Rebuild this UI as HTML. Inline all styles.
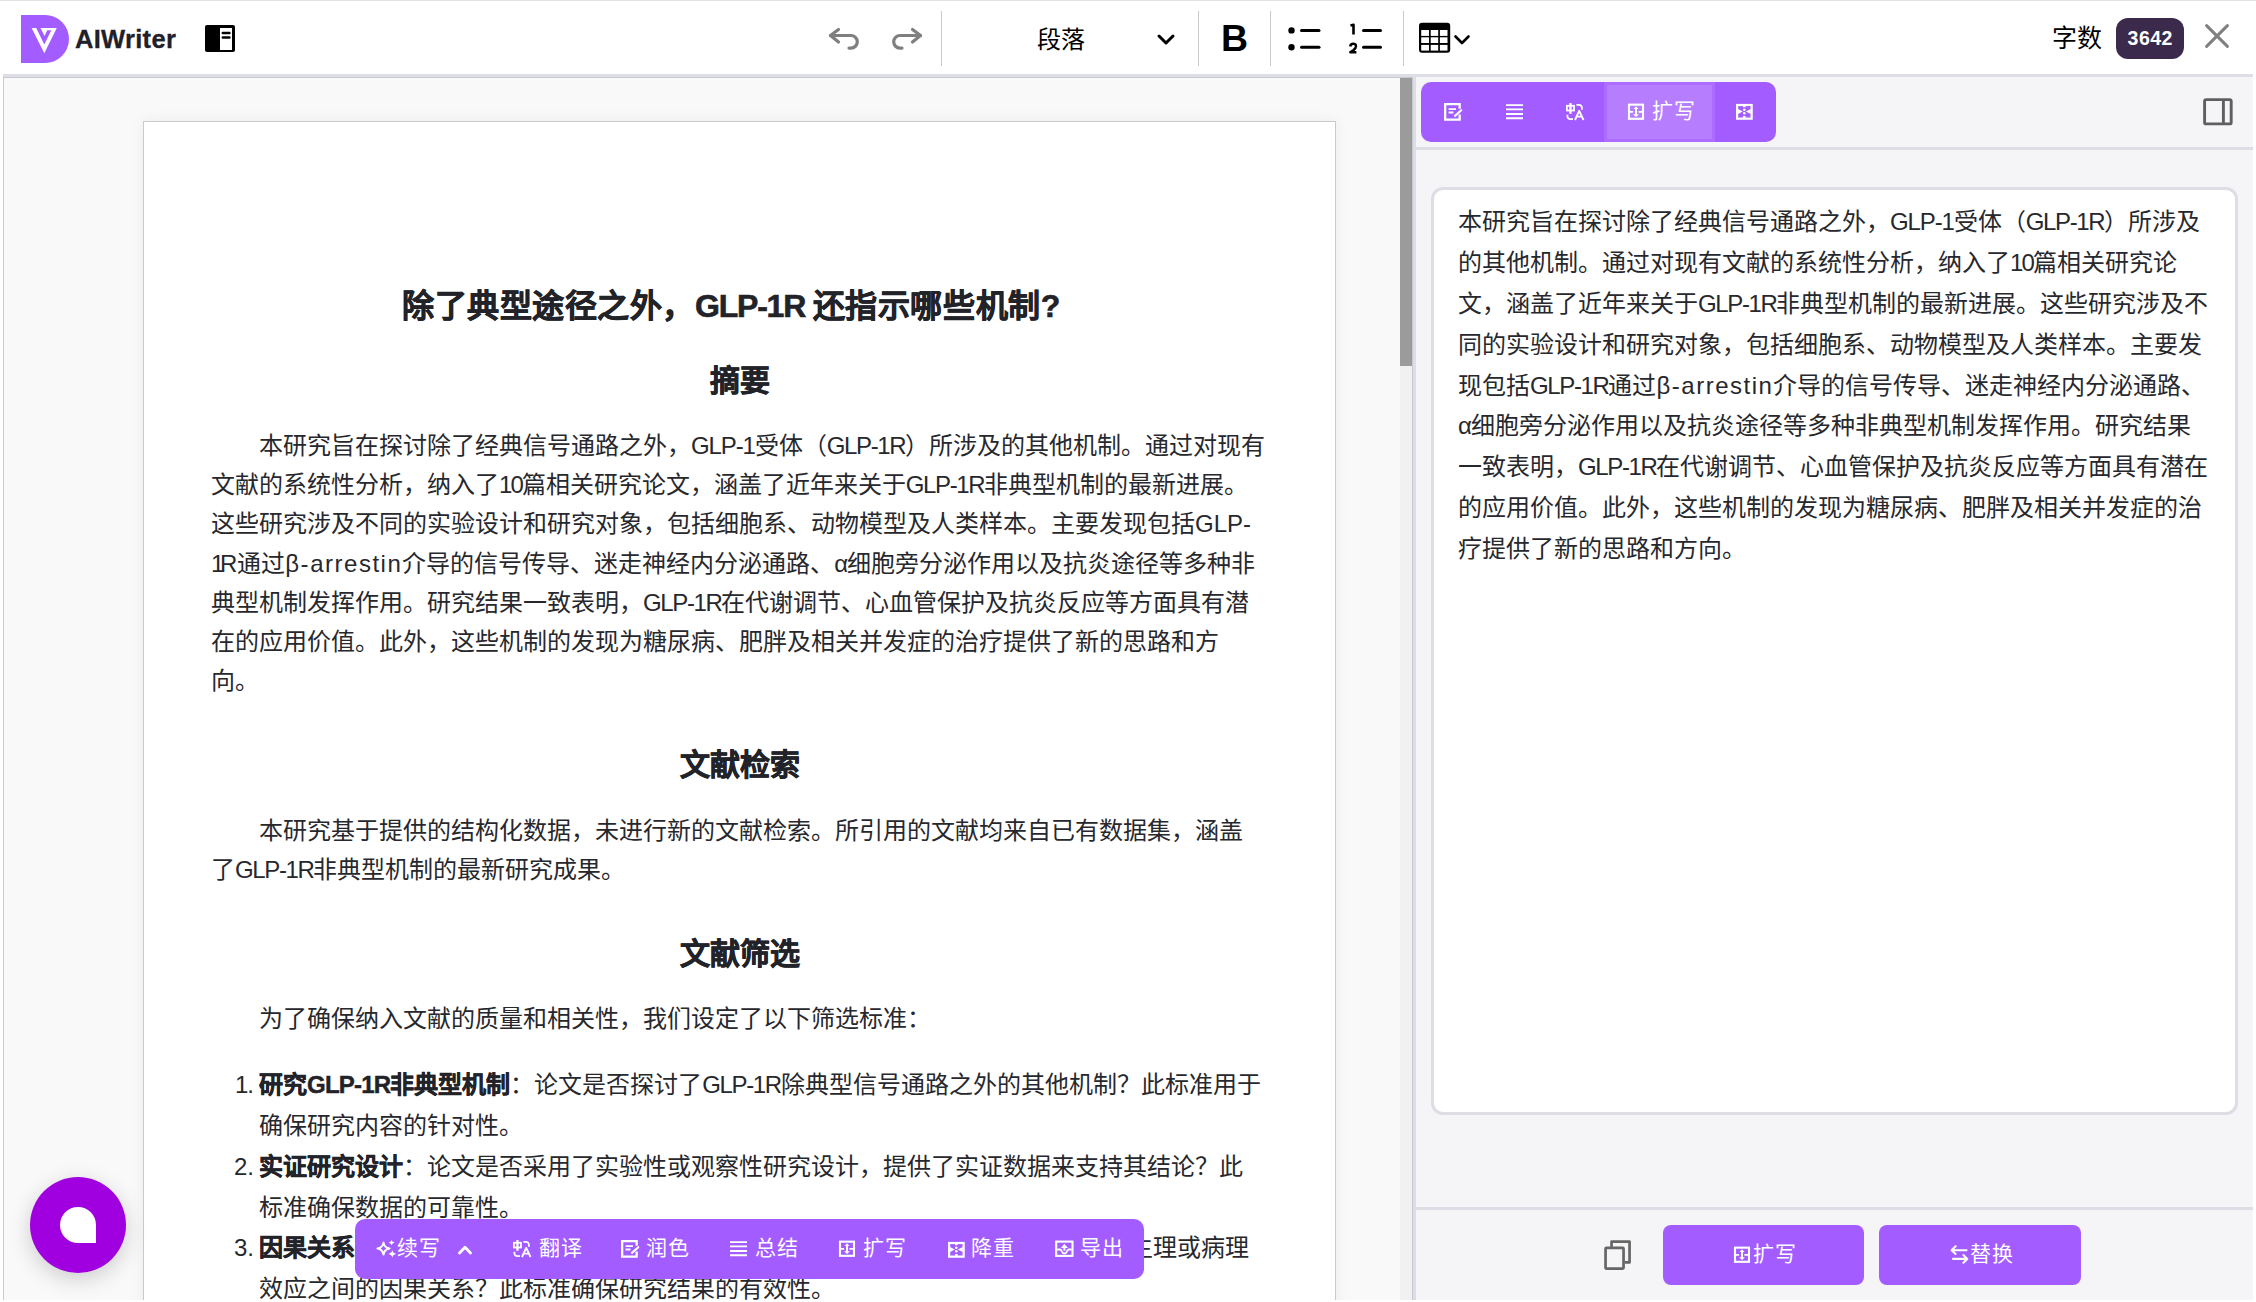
<!DOCTYPE html>
<html lang="zh-CN">
<head>
<meta charset="utf-8">
<style>
*{box-sizing:border-box;margin:0;padding:0}
html,body{width:2256px;height:1302px;overflow:hidden;background:#fff}
body{position:relative;font-family:"Liberation Sans",sans-serif;color:#26272b}
.abs{position:absolute}
#topline{left:0;top:0;width:2256px;height:1px;background:#e2e2e2}
#tb{left:0;top:1px;width:2256px;height:73px;background:#fff}
#tbb{left:3px;top:74px;width:2250px;height:3px;background:#dddde5}
.sep{position:absolute;top:11px;width:1px;height:55px;background:#cacaca}
#logo{left:21px;top:15px;width:48px;height:48px;background:#a35cff;border-radius:0 24px 24px 0}
#brand{left:75px;top:21.5px;font-weight:bold;font-size:25.5px;line-height:34px;color:#1f2029;letter-spacing:0.3px;-webkit-text-stroke:0.3px #1f2029}
#lp{left:3px;top:77px;width:1410px;height:1223px;background:#f9f9f9;border-top:1px solid #c9cacf;border-left:1px solid #c9cacf;border-right:1px solid #c9cacf;overflow:hidden}
#page{left:139px;top:43px;width:1193px;height:1300px;background:#fff;border:1px solid #c9cacf;box-shadow:0 0 14px rgba(0,0,0,0.06)}
#track{left:1396px;top:0;width:12px;height:1223px;background:#f1f1f1}
#thumb{left:1396px;top:0;width:12px;height:288px;background:#9b9b9b}
#rp{left:1413px;top:77px;width:840px;height:1223px;background:#f5f5f7;border-left:3px solid #dddde5}
#rph{left:0;top:70px;width:837px;height:3px;background:#dddde5}
#tabs{left:5px;top:5px;width:355px;height:60px;background:#a35cff;border-radius:10px;overflow:hidden}
#act{left:183px;top:0;width:111px;height:60px;background:#ab6cff;padding:3px}
#act div{width:105px;height:54px;background:#b67dff}
#box{left:15px;top:110px;width:807px;height:928px;background:#fff;border:3px solid #dddde5;border-radius:12px}
#rpf{left:0;top:1130px;width:837px;height:3px;background:#dddde5}
.btn{position:absolute;top:1148px;height:60px;background:#a35cff;border-radius:8px;color:#fff;font-size:21px;line-height:60px;text-align:center}
#chat{left:30px;top:1177px;width:96px;height:96px;border-radius:50%;background:#a000e0;box-shadow:0 6px 22px rgba(0,0,0,0.18)}
#chat div{position:absolute;left:30px;top:30px;width:36px;height:36px;background:#fff;border-radius:18px 18px 0 18px}
#ft{left:355px;top:1219px;width:789px;height:60px;background:#a35cff;border-radius:10px;color:#fff}
.fi{position:absolute;top:0;height:60px;line-height:60px;font-size:21px;white-space:nowrap}
.fi svg{position:absolute}
.ln{position:absolute;white-space:nowrap;color:#27282d}
</style>
</head>
<body>
<div id="topline" class="abs"></div>
<div id="tb" class="abs"></div>
<div id="tbb" class="abs"></div>

<!-- logo -->
<div id="logo" class="abs">
<svg width="48" height="48" viewBox="0 0 48 48" style="position:absolute;left:0;top:0">
<path d="M10.6 12.9 L35.8 12.9 L23.3 38.3 Z M15.2 12.9 L23.3 29.5 L30.3 15.3 L26.2 15.3 L23.6 21 L19.5 12.9 Z" fill="#fff" fill-rule="evenodd"/>
</svg>
</div>
<div id="brand" class="abs">AIWriter</div>
<!-- sidebar icon -->
<svg class="abs" style="left:205px;top:25px" width="30" height="27" viewBox="0 0 30 27">
<rect x="0" y="0" width="30" height="27" rx="2" fill="#000"/>
<rect x="15" y="3" width="12" height="22" fill="#fff"/>
<rect x="16.6" y="6.7" width="9" height="2.5" rx="1" fill="#000"/>
<rect x="16.6" y="11.3" width="9" height="2.5" rx="1" fill="#000"/>
</svg>

<!-- undo / redo -->
<svg class="abs" style="left:826px;top:25px" width="36" height="28" viewBox="0 0 36 28">
<g fill="none" stroke="#7f7f7f" stroke-width="3.2" stroke-linecap="round" stroke-linejoin="round">
<polyline points="12.5,4.5 4.5,10.5 12.5,17"/>
<path d="M4.5 10.5 H25 A6.3 6.3 0 0 1 25 23.1 H23"/>
</g>
</svg>
<svg class="abs" style="left:889px;top:25px;transform:scaleX(-1)" width="36" height="28" viewBox="0 0 36 28">
<g fill="none" stroke="#7f7f7f" stroke-width="3.2" stroke-linecap="round" stroke-linejoin="round">
<polyline points="12.5,4.5 4.5,10.5 12.5,17"/>
<path d="M4.5 10.5 H25 A6.3 6.3 0 0 1 25 23.1 H23"/>
</g>
</svg>
<div class="sep" style="left:941px"></div>
<div class="abs" style="left:1037px;top:21.5px;font-size:24px;line-height:36px;color:#000">段落</div>
<svg class="abs" style="left:1155px;top:32px" width="22" height="16" viewBox="0 0 22 16">
<polyline points="4,4 11,11 18,4" fill="none" stroke="#000" stroke-width="3" stroke-linecap="round" stroke-linejoin="round"/>
</svg>
<div class="sep" style="left:1198px"></div>
<div class="abs" style="left:1221px;top:18px;font-size:37.5px;font-weight:bold;line-height:40px;color:#000">B</div>
<div class="sep" style="left:1270px"></div>
<!-- bullet list -->
<svg class="abs" style="left:1284px;top:22px" width="40" height="34" viewBox="0 0 40 34">
<circle cx="7.5" cy="8.4" r="3.2" fill="#000"/><circle cx="7.5" cy="25.2" r="3.2" fill="#000"/>
<g stroke="#000" stroke-width="3" stroke-linecap="round"><line x1="17.5" y1="8.4" x2="35" y2="8.4"/><line x1="17.5" y1="25.2" x2="35" y2="25.2"/></g>
</svg>
<!-- numbered list -->
<svg class="abs" style="left:1344px;top:22px" width="42" height="34" viewBox="0 0 42 34">
<path d="M6.5 3.5 L9.5 2.8 L9.5 12.5" fill="none" stroke="#000" stroke-width="2.6" stroke-linejoin="round"/>
<path d="M6.2 24.5 Q6.5 21.8 9.2 21.8 Q12 21.8 12 24.3 Q12 26 9.6 28 L6.2 30.2 L12.4 30.2" fill="none" stroke="#000" stroke-width="2.4" stroke-linejoin="round"/>
<g stroke="#000" stroke-width="3" stroke-linecap="round"><line x1="19.5" y1="8.4" x2="36.5" y2="8.4"/><line x1="19.5" y1="25.2" x2="36.5" y2="25.2"/></g>
</svg>
<div class="sep" style="left:1403px"></div>
<!-- table -->
<svg class="abs" style="left:1418px;top:22px" width="56" height="32" viewBox="0 0 56 32">
<rect x="1" y="0.8" width="31.2" height="30" rx="3" fill="#000"/>
<g fill="#fff">
<rect x="3.2" y="8" width="7.8" height="5.9"/><rect x="12.7" y="8" width="7.5" height="5.9"/><rect x="21.9" y="8" width="7.6" height="5.9"/>
<rect x="3.2" y="15.3" width="7.8" height="5.7"/><rect x="12.7" y="15.3" width="7.5" height="5.7"/><rect x="21.9" y="15.3" width="7.6" height="5.7"/>
<rect x="3.2" y="22.9" width="7.8" height="5.7"/><rect x="12.7" y="22.9" width="7.5" height="5.7"/><rect x="21.9" y="22.9" width="7.6" height="5.7"/>
</g>
<polyline points="37.5,14.5 44,21 50.5,14.5" fill="none" stroke="#000" stroke-width="2.6" stroke-linecap="round" stroke-linejoin="round"/>
</svg>

<!-- right toolbar -->
<div class="abs" style="left:2052px;top:20px;font-size:25px;line-height:36px;color:#000">字数</div>
<div class="abs" style="left:2116px;top:18px;width:68px;height:41px;border-radius:12px;background:#3c2a4d;color:#fff;font-weight:bold;font-size:19.5px;line-height:41px;text-align:center;letter-spacing:0.5px;text-indent:0.5px">3642</div>
<svg class="abs" style="left:2202px;top:21px" width="30" height="30" viewBox="0 0 30 30">
<g stroke="#808080" stroke-width="3" stroke-linecap="round"><line x1="4.6" y1="4.6" x2="25.4" y2="25.4"/><line x1="25.4" y1="4.6" x2="4.6" y2="25.4"/></g>
</svg>

<!-- left panel -->
<div id="lp" class="abs">
  <div id="page" class="abs"></div>
  <div id="track" class="abs"></div>
  <div id="thumb" class="abs"></div>
</div>

<!-- right panel -->
<div id="rp" class="abs">
  <div id="rph" class="abs"></div>
  <div id="tabs" class="abs">
    <div id="act" class="abs"><div></div></div>
  </div>
  <svg class="abs" style="left:786px;top:20px" width="32" height="30" viewBox="0 0 32 30">
  <rect x="2.6" y="2.6" width="26.6" height="24.3" rx="1.5" fill="none" stroke="#5f5f5f" stroke-width="2.9"/>
  <line x1="21.4" y1="2.6" x2="21.4" y2="26.9" stroke="#5f5f5f" stroke-width="2.9"/>
  </svg>
  <div id="box" class="abs"></div>
  <div id="rpf" class="abs"></div>
  <svg class="abs" style="left:188px;top:1160px" width="32" height="34" viewBox="0 0 32 34">
  <g fill="none" stroke="#666" stroke-width="2.8" stroke-linejoin="round">
  <path d="M7.55 10.85 V4.55 H25.55 V25.45 H20.9" stroke-width="2.7"/>
  <rect x="1.55" y="10.85" width="18" height="20.7" rx="0.8" stroke-width="2.7"/>
  </g>
  </svg>
</div>
<div class="btn" style="left:1663px;top:1225px;width:201px"></div>
<div class="btn" style="left:1879px;top:1225px;width:202px"></div>

<div class="ln" style="left:402px;top:285.50px;font-size:32px;line-height:40px;font-weight:bold;-webkit-text-stroke:0.6px #222329;color:#222329;letter-spacing:0.55px">除了典型途径之外，<span style="letter-spacing:-1.20px;">GLP-1R </span>还指示哪些机制<span style="letter-spacing:-2.33px;">?</span></div>
<div class="ln" style="left:710px;top:360.85px;font-size:30px;line-height:40px;font-weight:bold;-webkit-text-stroke:0.6px #222329;color:#222329">摘要</div>
<div class="ln" style="left:259px;top:426.02px;font-size:24px;line-height:39.17px;">本研究旨在探讨除了经典信号通路之外，<span style="letter-spacing:-1.11px;">GLP-1</span>受体（<span style="letter-spacing:-1.38px;">GLP-1R</span>）所涉及的其他机制。通过对现有</div>
<div class="ln" style="left:211px;top:465.19px;font-size:24px;line-height:39.17px;">文献的系统性分析，纳入了<span style="letter-spacing:-1.97px;">10</span>篇相关研究论文，涵盖了近年来关于<span style="letter-spacing:-1.38px;">GLP-1R</span>非典型机制的最新进展。</div>
<div class="ln" style="left:211px;top:504.36px;font-size:24px;line-height:39.17px;">这些研究涉及不同的实验设计和研究对象，包括细胞系、动物模型及人类样本。主要发现包括GLP-</div>
<div class="ln" style="left:211px;top:543.52px;font-size:24px;line-height:39.17px;"><span style="letter-spacing:-4.4px">1</span>R通过<span style="letter-spacing:1.52px;">β-arrestin</span>介导的信号传导、迷走神经内分泌通路、<span style="letter-spacing:-1.30px;">α</span>细胞旁分泌作用以及抗炎途径等多种非</div>
<div class="ln" style="left:211px;top:582.69px;font-size:24px;line-height:39.17px;">典型机制发挥作用。研究结果一致表明，<span style="letter-spacing:-1.38px;">GLP-1R</span>在代谢调节、心血管保护及抗炎反应等方面具有潜</div>
<div class="ln" style="left:211px;top:621.87px;font-size:24px;line-height:39.17px;">在的应用价值。此外，这些机制的发现为糖尿病、肥胖及相关并发症的治疗提供了新的思路和方</div>
<div class="ln" style="left:211px;top:661.03px;font-size:24px;line-height:39.17px;">向。</div>
<div class="ln" style="left:680px;top:744.60px;font-size:30px;line-height:40px;font-weight:bold;-webkit-text-stroke:0.6px #222329;color:#222329">文献检索</div>
<div class="ln" style="left:259px;top:811.01px;font-size:24px;line-height:39.17px;">本研究基于提供的结构化数据，未进行新的文献检索。所引用的文献均来自已有数据集，涵盖</div>
<div class="ln" style="left:211px;top:850.18px;font-size:24px;line-height:39.17px;">了<span style="letter-spacing:-1.38px;">GLP-1R</span>非典型机制的最新研究成果。</div>
<div class="ln" style="left:680px;top:933.60px;font-size:30px;line-height:40px;font-weight:bold;-webkit-text-stroke:0.6px #222329;color:#222329">文献筛选</div>
<div class="ln" style="left:259px;top:998.62px;font-size:24px;line-height:39.17px;">为了确保纳入文献的质量和相关性，我们设定了以下筛选标准：</div>
<div class="ln" style="left:259px;top:1065.45px;font-size:24px;line-height:40.7px;"><span style="font-weight:bold;-webkit-text-stroke:0.45px #222329;color:#222329;">研究</span><span style="font-weight:bold;-webkit-text-stroke:0.45px #222329;color:#222329;letter-spacing:-0.78px;">GLP-1R</span><span style="font-weight:bold;-webkit-text-stroke:0.45px #222329;color:#222329;">非典型机制</span>：论文是否探讨了<span style="letter-spacing:-1.38px;">GLP-1R</span>除典型信号通路之外的其他机制？此标准用于</div>
<div class="ln" style="left:259px;top:1106.15px;font-size:24px;line-height:40.7px;">确保研究内容的针对性。</div>
<div class="ln" style="left:259px;top:1146.85px;font-size:24px;line-height:40.7px;"><span style="font-weight:bold;-webkit-text-stroke:0.45px #222329;color:#222329;">实证研究设计</span>：论文是否采用了实验性或观察性研究设计，提供了实证数据来支持其结论？此</div>
<div class="ln" style="left:259px;top:1187.55px;font-size:24px;line-height:40.7px;">标准确保数据的可靠性。</div>
<div class="ln" style="left:259px;top:1228.25px;font-size:24px;line-height:40.7px;"><span style="font-weight:bold;-webkit-text-stroke:0.45px #222329;color:#222329;">因果关系推断</span>：论文是否探讨了<span style="letter-spacing:-1.38px;">GLP-1R</span>激活与代谢或</div>
<div class="ln" style="left:259px;top:1268.95px;font-size:24px;line-height:40.7px;">效应之间的因果关系？此标准确保研究结果的有效性。</div>
<div class="ln" style="right:2002px;top:1065.45px;font-size:24px;line-height:40.7px;"><span style="letter-spacing:-1px">1</span>.</div>
<div class="ln" style="right:2002px;top:1146.85px;font-size:24px;line-height:40.7px;">2.</div>
<div class="ln" style="right:2002px;top:1228.25px;font-size:24px;line-height:40.7px;">3.</div>
<div class="ln" style="left:1129px;top:1228.25px;font-size:24px;line-height:40.7px;">生理或病理</div>
<div class="ln" style="left:1458px;top:202.30px;font-size:24px;line-height:40.8px;">本研究旨在探讨除了经典信号通路之外，<span style="letter-spacing:-1.11px;">GLP-1</span>受体（<span style="letter-spacing:-1.38px;">GLP-1R</span>）所涉及</div>
<div class="ln" style="left:1458px;top:243.10px;font-size:24px;line-height:40.8px;">的其他机制。通过对现有文献的系统性分析，纳入了<span style="letter-spacing:-1.97px;">10</span>篇相关研究论</div>
<div class="ln" style="left:1458px;top:283.90px;font-size:24px;line-height:40.8px;">文，涵盖了近年来关于<span style="letter-spacing:-1.38px;">GLP-1R</span>非典型机制的最新进展。这些研究涉及不</div>
<div class="ln" style="left:1458px;top:324.70px;font-size:24px;line-height:40.8px;">同的实验设计和研究对象，包括细胞系、动物模型及人类样本。主要发</div>
<div class="ln" style="left:1458px;top:365.50px;font-size:24px;line-height:40.8px;">现包括<span style="letter-spacing:-1.38px;">GLP-1R</span>通过<span style="letter-spacing:1.52px;">β-arrestin</span>介导的信号传导、迷走神经内分泌通路、</div>
<div class="ln" style="left:1458px;top:406.30px;font-size:24px;line-height:40.8px;"><span style="letter-spacing:-1.30px;">α</span>细胞旁分泌作用以及抗炎途径等多种非典型机制发挥作用。研究结果</div>
<div class="ln" style="left:1458px;top:447.10px;font-size:24px;line-height:40.8px;">一致表明，<span style="letter-spacing:-1.38px;">GLP-1R</span>在代谢调节、心血管保护及抗炎反应等方面具有潜在</div>
<div class="ln" style="left:1458px;top:487.90px;font-size:24px;line-height:40.8px;">的应用价值。此外，这些机制的发现为糖尿病、肥胖及相关并发症的治</div>
<div class="ln" style="left:1458px;top:528.70px;font-size:24px;line-height:40.8px;">疗提供了新的思路和方向。</div>
<div id="chat" class="abs"><div></div></div>
<div id="ft" class="abs"></div>
<!-- tab icons -->
<svg class="abs" style="left:1438px;top:98px" width="30" height="30" viewBox="0 0 30 30"><g fill="none" stroke="#fff" stroke-linecap="butt">
<path d="M21.65 10.8 V6.15 H7.15 V21.55 H21.65 V16.4" stroke-width="2.3"/>
<path d="M10.6 11.05 H18 M10.6 14.5 H15.4" stroke-width="1.8"/>
<path d="M17 17.9 L23.3 12.2" stroke-width="2.1" stroke-linecap="round"/></g></svg>
<svg class="abs" style="left:1500px;top:98px" width="30" height="30" viewBox="0 0 30 30"><g stroke="#fff" stroke-width="1.9">
<path d="M6 7.1 H23 M6 11.4 H23 M6 16 H23 M6 20.2 H23"/></g></svg>
<svg class="abs" style="left:1560px;top:98px" width="30" height="30" viewBox="0 0 30 30"><g fill="none" stroke="#fff" stroke-width="1.8">
<rect x="6.9" y="7.8" width="7.1" height="4.7"/>
<path d="M10.45 5 V15.8" stroke-width="2.3"/>
<path d="M16.4 6.85 H19 A2.9 2.9 0 0 1 21.9 9.75 V11.8"/>
<path d="M7.4 16.8 V18.2 A2.9 2.9 0 0 0 10.3 21.1 H13"/>
<path d="M15 22 L19.2 12.9 L23.5 22 M16.6 18.6 H21.8" stroke-width="1.9" stroke-linejoin="round"/></g></svg>
<svg class="abs" style="left:1620px;top:96px" width="30" height="30" viewBox="0 0 30 30"><g fill="none" stroke="#fff" stroke-width="2.1">
<rect x="9" y="8.65" width="14" height="14.15"/>
<path d="M9 15.9 H13.1 M18.4 15.9 H23" stroke-width="1.9"/>
<path d="M16 12 V19.5" stroke-width="2"/></g>
<path d="M16 10.3 L18.5 13 H13.5 Z M16 21.1 L19 18.2 H13 Z" fill="#fff"/></svg>
<div class="ln" style="left:1652px;top:91px;font-size:21px;line-height:40px;color:#fff;letter-spacing:1.3px">扩写</div>
<svg class="abs" style="left:1728px;top:96px" width="30" height="30" viewBox="0 0 30 30"><g fill="none" stroke="#fff">
<rect x="9.1" y="9" width="14.55" height="13.65" stroke-width="2.2"/></g>
<g fill="#fff"><rect x="15" y="9.5" width="2.6" height="1.7"/><rect x="15" y="20" width="2.6" height="2"/>
<path d="M10 12.9 L14.8 15.5 L10 18.1 Z M22.8 12.9 L17.8 15.5 L22.8 18.1 Z"/>
<circle cx="16.3" cy="13.7" r="1.3"/><circle cx="16.3" cy="17.3" r="1.3"/></g></svg>
<!-- floating toolbar -->
<svg class="abs" style="left:372px;top:1234px" width="30" height="30" viewBox="0 0 30 30">
<path d="M11.5 8.6 Q12.3 13.7 17.6 14.5 Q12.3 15.3 11.5 20.6 Q10.7 15.3 5.4 14.5 Q10.7 13.7 11.5 8.6 Z" fill="none" stroke="#fff" stroke-width="2" stroke-linejoin="round"/>
<path d="M19.6 5.9 Q20 8.2 22.8 8.6 Q20 9 19.6 11.3 Q19.2 9 16.5 8.6 Q19.2 8.2 19.6 5.9 Z M20.3 16.1 Q20.8 19.2 24.2 19.9 Q20.8 20.5 20.3 23.7 Q19.8 20.5 16.5 19.9 Q19.8 19.2 20.3 16.1 Z" fill="#fff"/>
</svg>
<div class="ln" style="left:397px;top:1228.4px;font-size:21px;line-height:40px;color:#fff;letter-spacing:1.3px">续写</div>
<svg class="abs" style="left:455px;top:1240px" width="20" height="18" viewBox="0 0 20 18"><polyline points="4.5,13 10,7.3 15.5,13" fill="none" stroke="#fff" stroke-width="2.8" stroke-linecap="round" stroke-linejoin="round"/></svg>
<svg class="abs" style="left:507px;top:1235.3px" width="30" height="30" viewBox="0 0 30 30"><g fill="none" stroke="#fff" stroke-width="1.8">
<rect x="6.9" y="7.8" width="7.1" height="4.7"/>
<path d="M10.45 5 V15.8" stroke-width="2.3"/>
<path d="M16.4 6.85 H19 A2.9 2.9 0 0 1 21.9 9.75 V11.8"/>
<path d="M7.4 16.8 V18.2 A2.9 2.9 0 0 0 10.3 21.1 H13"/>
<path d="M15 22 L19.2 12.9 L23.5 22 M16.6 18.6 H21.8" stroke-width="1.9" stroke-linejoin="round"/></g></svg>
<div class="ln" style="left:538.5px;top:1228.4px;font-size:21px;line-height:40px;color:#fff;letter-spacing:1.3px">翻译</div>
<svg class="abs" style="left:614.5px;top:1235px" width="30" height="30" viewBox="0 0 30 30"><g fill="none" stroke="#fff" stroke-linecap="butt">
<path d="M21.65 10.8 V6.15 H7.15 V21.55 H21.65 V16.4" stroke-width="2.3"/>
<path d="M10.6 11.05 H18 M10.6 14.5 H15.4" stroke-width="1.8"/>
<path d="M17 17.9 L23.3 12.2" stroke-width="2.1" stroke-linecap="round"/></g></svg>
<div class="ln" style="left:646px;top:1228.4px;font-size:21px;line-height:40px;color:#fff;letter-spacing:1.3px">润色</div>
<svg class="abs" style="left:724.3px;top:1235.3px" width="30" height="30" viewBox="0 0 30 30"><g stroke="#fff" stroke-width="1.9">
<path d="M6 7.1 H23 M6 11.4 H23 M6 16 H23 M6 20.2 H23"/></g></svg>
<div class="ln" style="left:755px;top:1228.4px;font-size:21px;line-height:40px;color:#fff;letter-spacing:1.3px">总结</div>
<svg class="abs" style="left:830.85px;top:1233.3px" width="30" height="30" viewBox="0 0 30 30"><g fill="none" stroke="#fff" stroke-width="2.1">
<rect x="9" y="8.65" width="14" height="14.15"/>
<path d="M9 15.9 H13.1 M18.4 15.9 H23" stroke-width="1.9"/>
<path d="M16 12 V19.5" stroke-width="2"/></g>
<path d="M16 10.3 L18.5 13 H13.5 Z M16 21.1 L19 18.2 H13 Z" fill="#fff"/></svg>
<div class="ln" style="left:862.5px;top:1228.4px;font-size:21px;line-height:40px;color:#fff;letter-spacing:1.3px">扩写</div>
<svg class="abs" style="left:939.7px;top:1234px" width="30" height="30" viewBox="0 0 30 30"><g fill="none" stroke="#fff">
<rect x="9.1" y="9" width="14.55" height="13.65" stroke-width="2.2"/></g>
<g fill="#fff"><rect x="15" y="9.5" width="2.6" height="1.7"/><rect x="15" y="20" width="2.6" height="2"/>
<path d="M10 12.9 L14.8 15.5 L10 18.1 Z M22.8 12.9 L17.8 15.5 L22.8 18.1 Z"/>
<circle cx="16.3" cy="13.7" r="1.3"/><circle cx="16.3" cy="17.3" r="1.3"/></g></svg>
<div class="ln" style="left:971px;top:1228.4px;font-size:21px;line-height:40px;color:#fff;letter-spacing:1.3px">降重</div>
<svg class="abs" style="left:1049px;top:1234px" width="30" height="30" viewBox="0 0 30 30"><g fill="none" stroke="#fff">
<rect x="7.2" y="7.6" width="16.3" height="14.3" stroke-width="2.1"/>
<path d="M15.4 13 V16.6" stroke-width="2"/>
<path d="M8.2 15.5 H11 Q12 15.5 12.6 17 Q13.6 19.5 15.4 19.5 Q17.2 19.5 18.2 17 Q18.8 15.5 19.8 15.5 H22.5" stroke-width="1.9"/></g>
<path d="M15.4 9.8 L19 14 H11.8 Z" fill="#fff"/></svg>
<div class="ln" style="left:1080px;top:1228.4px;font-size:21px;line-height:40px;color:#fff;letter-spacing:1.3px">导出</div>
<!-- buttons -->
<svg class="abs" style="left:1726px;top:1239.1px" width="30" height="30" viewBox="0 0 30 30"><g fill="none" stroke="#fff" stroke-width="2.1">
<rect x="9" y="8.65" width="14" height="14.15"/>
<path d="M9 15.9 H13.1 M18.4 15.9 H23" stroke-width="1.9"/>
<path d="M16 12 V19.5" stroke-width="2"/></g>
<path d="M16 10.3 L18.5 13 H13.5 Z M16 21.1 L19 18.2 H13 Z" fill="#fff"/></svg>
<div class="ln" style="left:1753px;top:1234.2px;font-size:21px;line-height:40px;color:#fff;letter-spacing:1.3px">扩写</div>
<svg class="abs" style="left:1946px;top:1240px" width="26" height="28" viewBox="0 0 26 28"><g fill="none" stroke="#fff" stroke-width="2.1" stroke-linecap="round" stroke-linejoin="round"><path d="M6 10.2 H20.5 M9.6 6.3 L5.6 10.2 L9.6 14"/><path d="M7 18.9 H21 M17.4 15 L21.3 18.9 L17.4 22.8"/></g></svg>
<div class="ln" style="left:1969.5px;top:1234.2px;font-size:21px;line-height:40px;color:#fff;letter-spacing:1.3px">替换</div>

</body>
</html>
